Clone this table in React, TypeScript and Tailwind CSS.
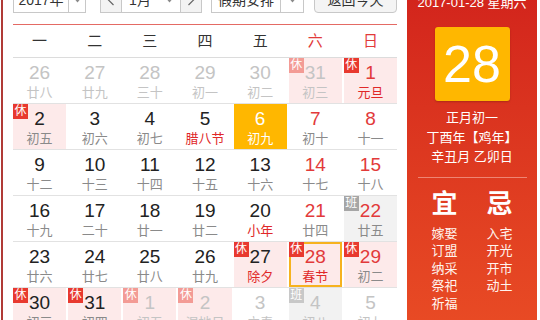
import React from 'react';

type Day = {
  n: number;
  l: string;
  other?: boolean;
  tag?: '休' | '班';
  red?: boolean;
  fest?: boolean;
  today?: boolean;
  sel?: boolean;
};

const weeks: Day[][] = [
  [
    { n: 26, l: '廿八', other: true },
    { n: 27, l: '廿九', other: true },
    { n: 28, l: '三十', other: true },
    { n: 29, l: '初一', other: true },
    { n: 30, l: '初二', other: true },
    { n: 31, l: '初三', other: true, tag: '休' },
    { n: 1, l: '元旦', tag: '休', red: true, fest: true },
  ],
  [
    { n: 2, l: '初五', tag: '休' },
    { n: 3, l: '初六' },
    { n: 4, l: '初七' },
    { n: 5, l: '腊八节', fest: true },
    { n: 6, l: '初九', today: true },
    { n: 7, l: '初十', red: true },
    { n: 8, l: '十一', red: true },
  ],
  [
    { n: 9, l: '十二' },
    { n: 10, l: '十三' },
    { n: 11, l: '十四' },
    { n: 12, l: '十五' },
    { n: 13, l: '十六' },
    { n: 14, l: '十七', red: true },
    { n: 15, l: '十八', red: true },
  ],
  [
    { n: 16, l: '十九' },
    { n: 17, l: '二十' },
    { n: 18, l: '廿一' },
    { n: 19, l: '廿二' },
    { n: 20, l: '小年', fest: true },
    { n: 21, l: '廿四', red: true },
    { n: 22, l: '廿五', red: true, tag: '班' },
  ],
  [
    { n: 23, l: '廿六' },
    { n: 24, l: '廿七' },
    { n: 25, l: '廿八' },
    { n: 26, l: '廿九' },
    { n: 27, l: '除夕', tag: '休', fest: true },
    { n: 28, l: '春节', tag: '休', red: true, fest: true, sel: true },
    { n: 29, l: '初二', tag: '休', red: true },
  ],
  [
    { n: 30, l: '初三', tag: '休' },
    { n: 31, l: '初四', tag: '休' },
    { n: 1, l: '初五', other: true, tag: '休' },
    { n: 2, l: '湿地日', other: true, tag: '休' },
    { n: 3, l: '立春', other: true },
    { n: 4, l: '初八', other: true, tag: '班' },
    { n: 5, l: '初九', other: true },
  ],
];

const Arrow = () => (
  <svg width="9" height="6" viewBox="0 0 9 6">
    <path d="M0 0 L9 0 L4.5 5.5 Z" fill="#8a8a8a" />
  </svg>
);

const Chevron = ({ left }: { left?: boolean }) => (
  <svg width="8" height="12" viewBox="0 0 8 12">
    <path d={left ? 'M6.5 1 L1.5 6 L6.5 11' : 'M1.5 1 L6.5 6 L1.5 11'} fill="none" stroke="#666" strokeWidth="1.2" />
  </svg>
);

const Cell = ({ d }: { d: Day }) => {
  let bg = 'bg-white';
  if (d.today) bg = 'bg-[#ffb700]';
  else if (d.tag === '休') bg = 'bg-[#fdeaea]';
  else if (d.tag === '班') bg = 'bg-[#f2f2f2]';

  let num = 'text-[#222]';
  if (d.today) num = 'text-white';
  else if (d.other) num = 'text-[#c4c4c4]';
  else if (d.red) num = 'text-[#e23a3a]';

  let lunar = 'text-[#8a8a8a]';
  if (d.today) lunar = 'text-white';
  else if (d.other) lunar = 'text-[#c4c4c4]';
  else if (d.fest) lunar = 'text-[#e02828]';

  let badge = '';
  if (d.tag === '休') badge = d.other ? 'bg-[#f39b95]' : 'bg-[#e8392f]';
  if (d.tag === '班') badge = d.other ? 'bg-[#c8c8c8]' : 'bg-[#a6a6a6]';

  return (
    <div className={`relative flex flex-col items-center pt-[5px] ${bg} ${d.sel ? 'ring-2 ring-inset ring-[#f6b21f]' : ''}`}>
      {d.tag && (
        <span className={`absolute left-0 top-0 z-10 h-[15px] w-[15px] text-center text-[12px] leading-[15px] text-white ${badge}`}>
          {d.tag}
        </span>
      )}
      <span className={`text-[19px] leading-[20px] ${num}`}>{d.n}</span>
      <span className={`mt-px text-[13px] leading-[18px] ${lunar}`}>{d.l}</span>
    </div>
  );
};

export default function App() {
  const heads = ['一', '二', '三', '四', '五', '六', '日'];

  return (
    <div className="h-[320px] w-[540px] overflow-hidden bg-white font-['Liberation_Sans','Noto_Sans_CJK_SC',sans-serif]">
      <div className="-mt-[13px] ml-px flex border-l-2 border-[#b03a36] pl-[10px]">
        {/* calendar */}
        <div className="w-[384px]">
          <div className="flex h-[26px] items-stretch text-[14px] text-[#333]">
            <div className="flex w-[73px] border border-[#c8c8c8]">
              <span className="flex flex-1 items-center justify-center">2017年</span>
              <span className="flex w-[17px] items-center justify-center border-l border-[#c8c8c8]">
                <Arrow />
              </span>
            </div>
            <div className="ml-[14px] flex w-[22px] items-center justify-center border border-[#c8c8c8] bg-[#f3f3f3]">
              <Chevron left />
            </div>
            <div className="-ml-px flex w-[60px] border border-[#c8c8c8]">
              <span className="flex flex-1 items-center justify-center">1月</span>
              <span className="flex w-[22px] items-center justify-center">
                <Arrow />
              </span>
            </div>
            <div className="-ml-px flex w-[22px] items-center justify-center border border-[#c8c8c8] bg-[#f3f3f3]">
              <Chevron />
            </div>
            <div className="ml-[9px] flex w-[93px] border border-[#c8c8c8]">
              <span className="flex flex-1 items-center justify-center">假期安排</span>
              <span className="flex w-[23px] items-center justify-center border-l border-[#c8c8c8]">
                <Arrow />
              </span>
            </div>
            <div className="ml-[10px] flex flex-1 items-center justify-center rounded-sm border border-[#c8c8c8] bg-[#f4f4f4]">
              返回今天
            </div>
          </div>

          <div className="mt-[11px] border-t border-[#e46a64]" />

          <div className="grid h-[33px] grid-cols-7 items-center gap-x-[2px] border-b border-[#dcdcdc] text-center text-[15px]">
            {heads.map((h, i) => (
              <span key={h} className={i >= 5 ? 'text-[#e23a3a]' : 'text-[#333]'}>
                {h}
              </span>
            ))}
          </div>

          {weeks.map((w, i) => (
            <div key={i} className="grid h-[46px] grid-cols-7 gap-x-[2px] border-b border-[#e2e2e2]">
              {w.map((d, j) => (
                <Cell key={j} d={d} />
              ))}
            </div>
          ))}
        </div>

        {/* detail panel */}
        <div className="ml-[10px] flex w-[130px] flex-col items-center bg-linear-to-b from-[#d2231c] to-[#ea4d25] pb-10 text-white">
          <div className="pt-[6px] text-[13px] leading-[20px]">2017-01-28 星期六</div>
          <div className="mt-[14px] flex h-[74px] w-[75px] items-center justify-center rounded-[3px] bg-[#ffb700] text-[52px] leading-none shadow-[0_1px_2px_rgba(0,0,0,0.2)]">
            28
          </div>
          <div className="mt-[7px] text-center text-[13px] leading-[19.5px]">
            <div>正月初一</div>
            <div>丁酉年【鸡年】</div>
            <div>辛丑月 乙卯日</div>
          </div>
          <div className="mt-[10px] h-px w-[109px] bg-[#ee8574]" />
          <div className="mt-[11px] grid w-[110px] grid-cols-2">
            <div className="flex flex-col items-center">
              <span className="text-[26px] font-bold leading-[30px]">宜</span>
              <div className="mt-[6px] flex flex-col items-center text-[13px] leading-[17.5px] text-[#fff4ee]">
                <span>嫁娶</span>
                <span>订盟</span>
                <span>纳采</span>
                <span>祭祀</span>
                <span>祈福</span>
              </div>
            </div>
            <div className="flex flex-col items-center">
              <span className="text-[26px] font-bold leading-[30px]">忌</span>
              <div className="mt-[6px] flex flex-col items-center text-[13px] leading-[17.5px] text-[#fff4ee]">
                <span>入宅</span>
                <span>开光</span>
                <span>开市</span>
                <span>动土</span>
              </div>
            </div>
          </div>
        </div>
      </div>
    </div>
  );
}
